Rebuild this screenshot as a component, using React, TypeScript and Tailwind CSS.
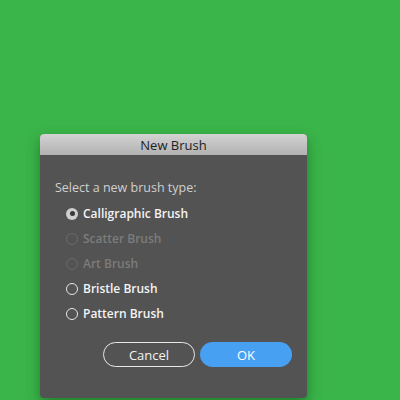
import React from "react";

function Radio({ label, checked, disabled }: { label: string; checked?: boolean; disabled?: boolean }) {
  return (
    <div className="flex h-[25px] items-center">
      {checked ? (
        <span className="flex h-[12px] w-[12px] items-center justify-center rounded-full bg-[#cfcfcf]">
          <span className="h-[5px] w-[5px] rounded-full bg-[#3a3a3a]" />
        </span>
      ) : (
        <span
          className={
            disabled
              ? "h-[12px] w-[12px] rounded-full border border-[#6a6a6a]"
              : "h-[12px] w-[12px] rounded-full border border-[#e6e6e6]"
          }
        />
      )}
      <span
        className={
          disabled
            ? "ml-[5px] text-[12px] leading-[16px] font-semibold text-[#7c7c7c]"
            : "ml-[5px] text-[12px] leading-[16px] font-semibold text-[#f4f4f4]"
        }
      >
        {label}
      </span>
    </div>
  );
}

export default function App() {
  return (
    <div
      className="h-[400px] w-[400px] overflow-hidden bg-[#3ab54a]"
      style={{ fontFamily: '"Open Sans", "DejaVu Sans", sans-serif' }}
    >
      <div className="pl-[40px] pt-[134px]">
        <div className="flex h-[264px] w-[267px] flex-col overflow-hidden rounded-[4px] bg-[#535353] shadow-[0_6px_14px_rgba(0,60,10,0.45)]">
          <div className="flex h-[21px] items-center justify-center bg-gradient-to-b from-[#d2d2d2] to-[#b2b2b2] text-[13px] leading-[16px] text-[#1e1e1e]">
            New Brush
          </div>
          <div className="flex flex-col pl-[15px] pt-[25px]">
            <div className="text-[12.5px] leading-[16px] text-[#d0d0d0]">Select a new brush type:</div>
            <div className="mt-[5px] flex flex-col pl-[11px]">
              <Radio label="Calligraphic Brush" checked />
              <Radio label="Scatter Brush" disabled />
              <Radio label="Art Brush" disabled />
              <Radio label="Bristle Brush" />
              <Radio label="Pattern Brush" />
            </div>
            <div className="mt-[16px] flex gap-[5px] pl-[48px]">
              <button className="flex h-[25px] w-[92px] items-center justify-center rounded-full border border-[#e8e8e8] text-[13px] leading-[16px] text-[#f2f2f2]">
                Cancel
              </button>
              <button className="flex h-[25px] w-[92px] items-center justify-center rounded-full bg-[#48a0f2] text-[13px] leading-[16px] text-white">
                OK
              </button>
            </div>
          </div>
        </div>
      </div>
    </div>
  );
}
